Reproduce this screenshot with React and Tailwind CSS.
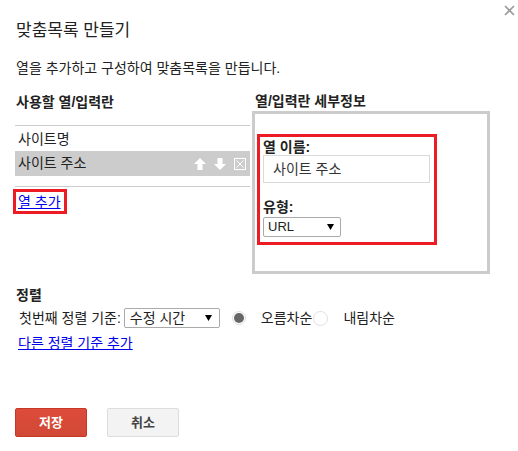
import React from 'react';

const font = { fontFamily: '"Liberation Sans", "Noto Sans CJK KR", sans-serif' };

const CloseIcon = () => (
  <svg width="11" height="11" viewBox="0 0 11 11" className="text-[#999]">
    <path d="M1 1L10 10M10 1L1 10" stroke="currentColor" strokeWidth="1.6" />
  </svg>
);

const ArrowUp = () => (
  <svg width="12" height="12" viewBox="0 0 12 12">
    <path d="M6 0L12 6H8.5V12H3.5V6H0Z" fill="#fff" />
  </svg>
);

const ArrowDown = () => (
  <svg width="12" height="12" viewBox="0 0 12 12">
    <path d="M6 12L12 6H8.5V0H3.5V6H0Z" fill="#fff" />
  </svg>
);

const BoxX = () => (
  <svg width="12" height="12" viewBox="0 0 12 12">
    <rect x="0.5" y="0.5" width="11" height="11" fill="none" stroke="#fff" />
    <path d="M2.5 2.5L9.5 9.5M9.5 2.5L2.5 9.5" stroke="#fff" strokeWidth="1" />
  </svg>
);

const Caret = () => (
  <svg width="7" height="6" viewBox="0 0 7 6">
    <path d="M0 0H7L3.5 6Z" fill="#000" />
  </svg>
);

const App = () => {
  return (
    <div className="relative w-[518px] h-[451px] bg-white text-[14px] text-[#222]" style={font}>
      {/* close */}
      <button className="absolute top-[5px] right-[3px] p-0">
        <CloseIcon />
      </button>

      {/* title */}
      <div className="pl-4 pt-[21px] text-[17px] leading-[20px]">맞춤목록 만들기</div>
      <div className="pl-4 mt-[17px] leading-[20px]">열을 추가하고 구성하여 맞춤목록을 만듭니다.</div>

      <div className="flex mt-[14px]">
        {/* Left column */}
        <div className="ml-[15px] w-[235px]">
          <div className="pl-[1px] font-bold leading-[20px]">사용할 열/입력란</div>
          <div className="mt-[13px] border-t border-[#ccc]">
            <div className="h-[25px] pl-[3px] pt-[2px] flex items-center">사이트명</div>
            <div className="h-[25px] pl-[3px] pr-[4px] flex items-center justify-between bg-[#cccccc]">
              <span>사이트 주소</span>
              <div className="flex items-center gap-[8px]">
                <ArrowUp />
                <ArrowDown />
                <BoxX />
              </div>
            </div>
          </div>
          <div className="mt-[10px] border-t border-[#ccc]" />
          <div className="mt-[2px] -ml-[2px] w-[54px] h-[25px] border-[3px] border-[#ed1c24] flex items-center pl-[2px]">
            <a href="#" className="text-[#0000ee] underline leading-[16px]">열 추가</a>
          </div>
        </div>

        {/* Right column */}
        <div className="ml-[2px] w-[238px]">
          <div className="pl-[3px] font-bold leading-[19px]">열/입력란 세부정보</div>
          <div className="h-[163px] border-[3px] border-[#cccccc] pt-[20px] pl-[2px]">
            <div className="w-[180px] h-[111px] border-[3px] border-[#ed1c24] pl-[3px]">
              <div className="font-bold leading-[16px] mt-[2px]">열 이름:</div>
              <div className="w-[167px] h-[28px] border border-[#d9d9d9] flex items-center pl-[9px] text-[#333]">
                사이트 주소
              </div>
              <div className="font-bold leading-[16px] mt-[16px]">유형:</div>
              <div className="mt-[2px] w-[78px] h-[20px] border border-[#aaa] rounded-[2px] flex items-center justify-between pl-[4px] pr-[6px]">
                <span className="leading-[16px] text-[13px]">URL</span>
                <Caret />
              </div>
            </div>
          </div>
        </div>
      </div>

      {/* Sort */}
      <div className="pl-4 mt-[13px] font-bold leading-[16px]">정렬</div>
      <div className="flex items-center mt-[5px] pl-[19px] h-[20px]">
        <span>첫번째 정렬 기준:</span>
        <div className="ml-[3px] w-[96px] h-[20px] border border-[#aaa] rounded-[2px] flex items-center justify-between pl-[5px] pr-[7px]">
          <span className="leading-[16px]">수정 시간</span>
          <Caret />
        </div>
        <span className="ml-[12px] w-[14px] h-[14px] rounded-full border border-[#e0e0e0] bg-white flex items-center justify-center">
          <span className="w-[10px] h-[10px] rounded-full bg-[#666]" />
        </span>
        <span className="ml-[15px]">오름차순</span>
        <span className="ml-[1px] w-[15px] h-[15px] rounded-full border border-[#e0e0e0] bg-white" />
        <span className="ml-[15px]">내림차순</span>
      </div>
      <div className="pl-[18px] mt-[7px] leading-[16px]">
        <a href="#" className="text-[#0000ee] underline">다른 정렬 기준 추가</a>
      </div>

      {/* Buttons */}
      <div className="flex gap-[20px] pl-[15px] mt-[57px]">
        <button className="w-[72px] h-[29px] rounded-[2px] border border-[#c53727] bg-gradient-to-b from-[#dd4b39] to-[#d14836] text-white font-bold text-[13px]">
          저장
        </button>
        <button className="w-[72px] h-[29px] rounded-[2px] border border-[#dcdcdc] bg-[#f3f3f3] text-[#444] font-bold text-[13px]">
          취소
        </button>
      </div>
    </div>
  );
};

export default App;
